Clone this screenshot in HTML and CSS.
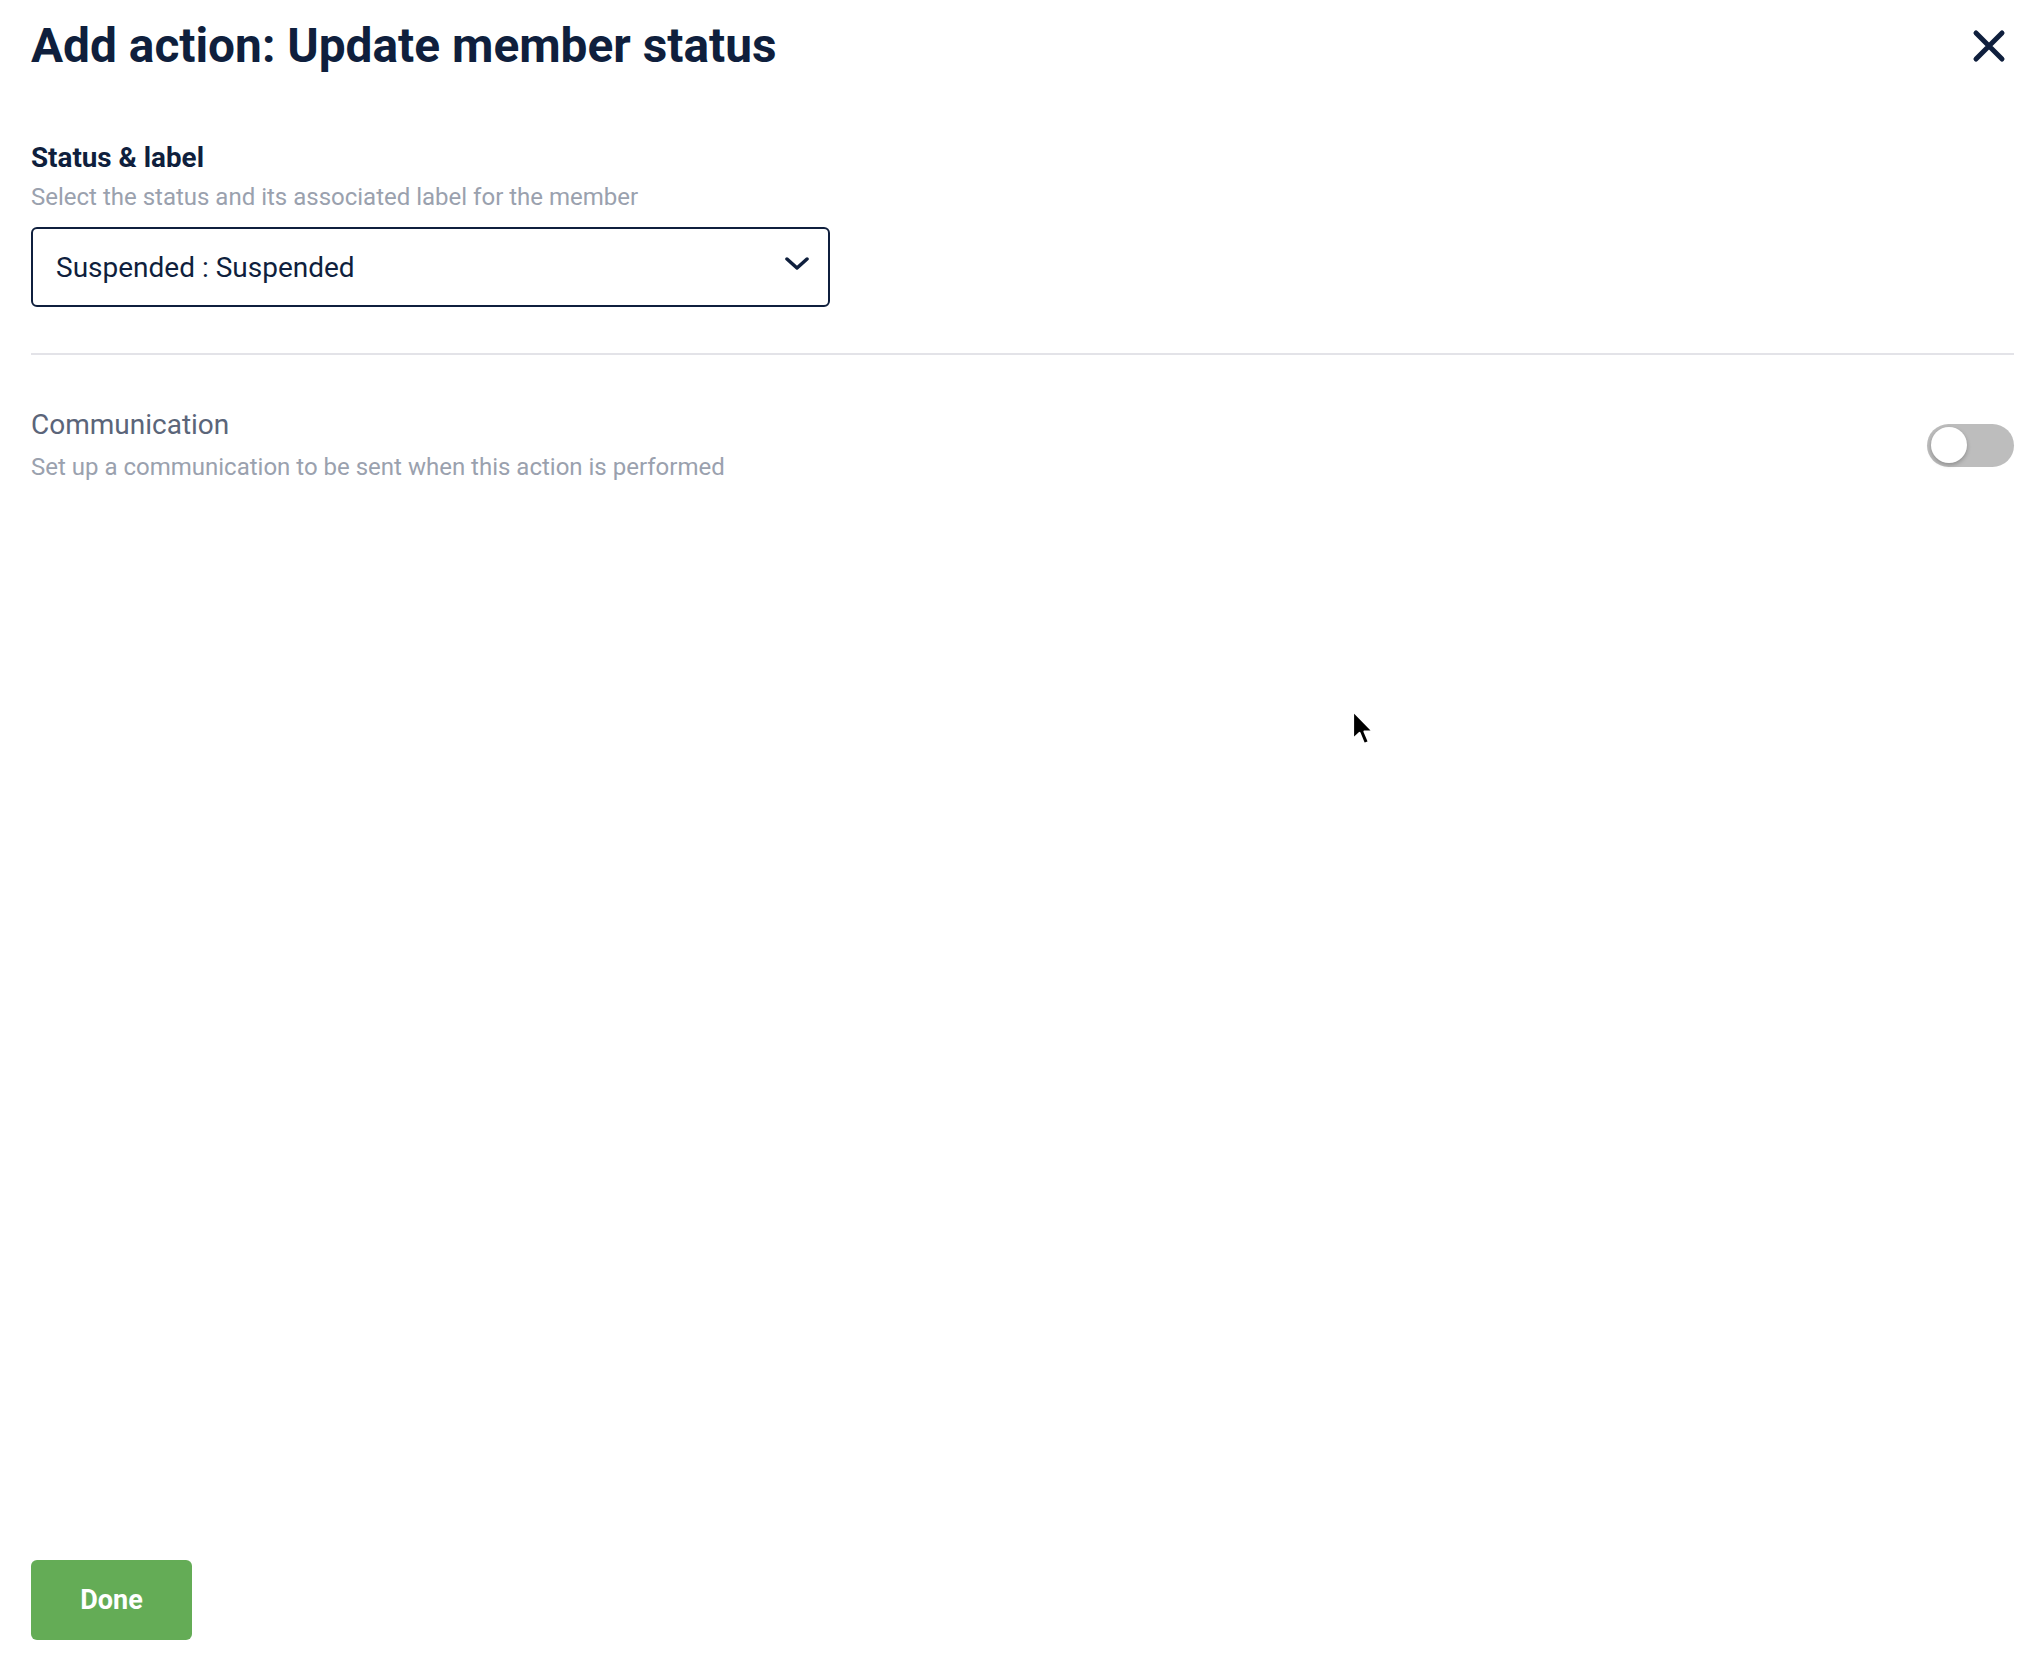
FILE: index.html
```html
<!DOCTYPE html>
<html lang="en">
<head>
<meta charset="utf-8">
<title>Add action: Update member status</title>
<link rel="stylesheet" href="styles.css">
</head>
<body>
<div class="page">
  <header class="header">
    <h1 class="title">Add action: Update member status</h1>
    <button class="close" aria-label="Close">
      <svg width="34" height="34" viewBox="0 0 34 34"><path d="M4 4 L30 30 M30 4 L4 30" stroke="#0f1f3d" stroke-width="5" stroke-linecap="round" fill="none"/></svg>
    </button>
  </header>

  <section class="field">
    <div class="label">Status &amp; label</div>
    <div class="hint">Select the status and its associated label for the member</div>
    <div class="select">
      <span class="select-value">Suspended : Suspended</span>
      <svg class="chev" width="24" height="14" viewBox="0 0 24 14"><path d="M2 2 L12 11 L22 2" stroke="#0f1f3d" stroke-width="3.5" stroke-linecap="round" stroke-linejoin="round" fill="none"/></svg>
    </div>
  </section>

  <hr class="divider">

  <section class="comm">
    <div class="comm-text">
      <div class="comm-title">Communication</div>
      <div class="hint">Set up a communication to be sent when this action is performed</div>
    </div>
    <div class="toggle"><div class="knob"></div></div>
  </section>

  <div class="spacer"></div>

  <footer class="footer">
    <button class="done">Done</button>
  </footer>

  <svg class="cursor" width="26" height="40" viewBox="0 0 26 40">
    <path d="M2 2 L2 30 L8.5 24 L13 35 L18 33 L13.5 22.5 L22 22.5 Z" fill="#000" stroke="#fff" stroke-width="2.2" stroke-linejoin="round"/>
  </svg>
</div>
</body>
</html>
```

FILE: styles.css
```css
* { box-sizing: border-box; }
html, body { margin: 0; padding: 0; background: #fff; }
body {
  font-family: Roboto, "Liberation Sans", Arial, sans-serif;
  color: #0f1f3d;
}
.page {
  position: relative;
  min-height: 1656px;
  display: flex;
  flex-direction: column;
  padding: 18px 16px 16px 31px;
}
.header {
  display: flex;
  align-items: center;
  justify-content: space-between;
  height: 56px;
}
.title {
  margin: 0;
  font-size: 47.8px;
  line-height: 56px;
  font-weight: 700;
  color: #0f1f3d;
}
.close {
  border: 0;
  background: none;
  padding: 0;
  margin-right: 8px;
  width: 34px;
  height: 34px;
  display: flex;
  cursor: pointer;
}
.field { margin-top: 68px; }
.label {
  font-size: 27.8px;
  line-height: 32px;
  font-weight: 700;
  color: #0f1f3d;
}
.hint {
  margin-top: 8px;
  font-size: 24px;
  line-height: 30px;
  color: #9aa1ae;
}
.select {
  margin-top: 15px;
  width: 799px;
  height: 80px;
  border: 2.5px solid #0f1f3d;
  border-radius: 6px;
  display: flex;
  align-items: center;
  justify-content: space-between;
  padding: 0 19px 0 23px;
}
.select-value {
  font-size: 28px;
  color: #0f1f3d;
}
.chev { display: block; margin-bottom: 6px; }
.divider {
  margin: 46px 0 0 0;
  border: 0;
  height: 2px;
  background: #e3e3e8;
}
.comm {
  margin-top: 53px;
  display: flex;
  align-items: center;
  justify-content: space-between;
}
.comm-title {
  font-size: 28px;
  line-height: 34px;
  color: #5b6579;
}
.comm .hint { margin-top: 10px; }
.toggle {
  width: 87px;
  height: 43px;
  border-radius: 22px;
  background: #bdbdbd;
  position: relative;
}
.knob {
  position: absolute;
  left: 4px;
  top: 3.5px;
  width: 36px;
  height: 36px;
  border-radius: 50%;
  background: #fff;
  box-shadow: 0 2px 4px rgba(0,0,0,0.25);
}
.spacer { flex: 1; }
.done {
  width: 161px;
  height: 80px;
  border: 0;
  border-radius: 6px;
  background: #64ac56;
  color: #fff;
  font-family: Roboto, "Liberation Sans", Arial, sans-serif;
  font-size: 27px;
  font-weight: 700;
  cursor: pointer;
}
.cursor {
  position: absolute;
  left: 1351px;
  top: 709px;
}
```
